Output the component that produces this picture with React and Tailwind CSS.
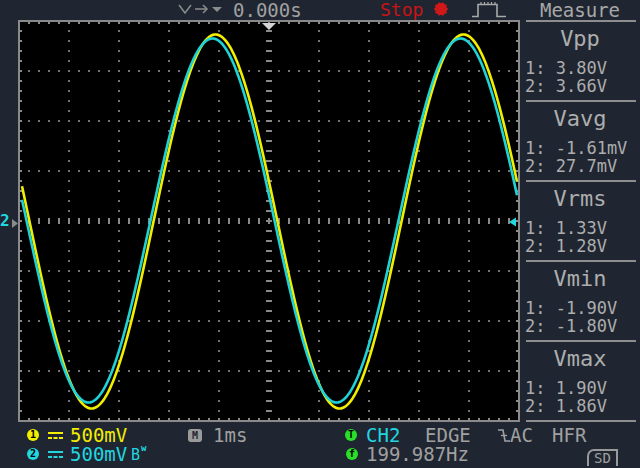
import React from 'react'

const GRID = '#727272'
const BORDER = '#8a8a8a'

const wave = (amp, center, peak) => {
  const pts = []
  for (let xs = 22; xs <= 517; xs++) {
    const ys = center - amp * Math.cos((2 * Math.PI * (xs - peak)) / 248)
    pts.push(`${xs - 18},${(ys - 20).toFixed(2)}`)
  }
  return pts.join(' ')
}

function Screen() {
  const marks = []
  for (let i = 1; i < 10; i++) {
    if (i === 5) continue
    for (let k = 1; k < 40; k++) marks.push(<rect key={`v${i}-${k}`} x={50 * i} y={10 * k} width="2" height="2" fill={GRID} />)
  }
  for (let j = 1; j < 8; j++) {
    if (j === 4) continue
    for (let k = 1; k < 50; k++) marks.push(<rect key={`h${j}-${k}`} x={10 * k} y={50 * j} width="2" height="2" fill={GRID} />)
  }
  // centre axes with perpendicular ticks
  for (let k = 1; k < 50; k++) marks.push(<rect key={`ch${k}`} x={10 * k} y="198" width="2" height="6" fill={BORDER} />)
  for (let k = 1; k < 40; k++) marks.push(<rect key={`cv${k}`} x="248" y={10 * k} width="6" height="2" fill={BORDER} />)
  // border ticks
  for (let k = 1; k < 50; k++) {
    marks.push(<rect key={`bt${k}`} x={10 * k} y="2" width="2" height="2" fill={BORDER} />)
    marks.push(<rect key={`bb${k}`} x={10 * k} y="398" width="2" height="2" fill={BORDER} />)
  }
  for (let k = 1; k < 40; k++) {
    marks.push(<rect key={`bl${k}`} x="2" y={10 * k} width="2" height="2" fill={BORDER} />)
    marks.push(<rect key={`br${k}`} x="498" y={10 * k} width="2" height="2" fill={BORDER} />)
  }

  return (
    <svg width="502" height="402" className="shrink-0 block">
      <rect x="0" y="0" width="502" height="402" fill="#000" />
      {marks}
      <rect x="1" y="1" width="500" height="400" fill="none" stroke={BORDER} strokeWidth="2" />
      <polyline points={wave(187, 221.5, 215.5)} fill="none" stroke="#f2ee00" strokeWidth="2.6" />
      <polyline points={wave(182, 220.5, 212.5)} fill="none" stroke="#1ed2d6" strokeWidth="2.6" />
      <polygon points="244,3 258,3 251,10" fill="#d4d4d4" />
      <polygon points="491,202 498,197.5 498,206.5" fill="#20d8e0" />
    </svg>
  )
}

function Spiky() {
  const pts = []
  for (let i = 0; i < 20; i++) {
    const a = (i / 20) * Math.PI * 2
    const r = i % 2 === 0 ? 7.2 : 5.8
    pts.push(`${(8 + r * Math.cos(a)).toFixed(2)},${(9 + r * Math.sin(a)).toFixed(2)}`)
  }
  return (
    <svg width="16" height="18" className="shrink-0">
      <polygon points={pts.join(' ')} fill="#d01818" />
    </svg>
  )
}

function TopBar() {
  return (
    <div className="h-[20px] flex text-[#a0a0a0]">
      <div className="w-[520px] flex items-start">
        <div className="w-[178px] shrink-0" />
        <svg width="55" height="20" className="shrink-0">
          <polyline points="1,5 7,13 13,5" fill="none" stroke="#8c8c8c" strokeWidth="1.5" />
          <line x1="17" y1="9" x2="29" y2="9" stroke="#8c8c8c" strokeWidth="1.5" />
          <polyline points="25,5 29,9 25,13" fill="none" stroke="#8c8c8c" strokeWidth="1.5" />
          <polygon points="34,7 44,7 39,12" fill="#8c8c8c" />
        </svg>
        <span className="w-[147px] shrink-0 text-[19px] leading-[20px]">0.000s</span>
        <span className="w-[53px] shrink-0 text-[18px] leading-[19px] text-[#c81414]">Stop</span>
        <Spiky />
        <div className="w-[23px] shrink-0" />
        <svg width="34" height="20" className="shrink-0">
          <polyline points="0,16.5 6,16.5 6,4.5 25,4.5 25,16.5 34,16.5" fill="none" stroke="#a8a8a8" strokeWidth="1.6" />
          {[9, 12.5, 16, 19.5, 23].map((x) => (
            <line key={x} x1={x} y1="2" x2={x} y2="4" stroke="#a8a8a8" strokeWidth="1.2" />
          ))}
        </svg>
      </div>
      <div className="w-[120px] text-center text-[19px] leading-[20px] text-[#a8a8a8]">Measure</div>
    </div>
  )
}

const measures = [
  { name: 'Vpp', v1: '3.80V', v2: '3.66V' },
  { name: 'Vavg', v1: '-1.61mV', v2: '27.7mV' },
  { name: 'Vrms', v1: '1.33V', v2: '1.28V' },
  { name: 'Vmin', v1: '-1.90V', v2: '-1.80V' },
  { name: 'Vmax', v1: '1.90V', v2: '1.86V' },
]

function Panel() {
  return (
    <div className="w-[120px] flex flex-col text-[#adadad]">
      <div className="h-[2px] ml-[6px] mr-[4px] bg-[#8e8e8e]" />
      {measures.map((m) => (
        <div key={m.name}>
          <div className="h-[78px] pt-[6px]">
            <div className="text-center text-[22px] leading-[22px]">{m.name}</div>
            <div className="mt-[9px] pl-[5px] text-[17px] leading-[18px] whitespace-pre">
              <div>{`1: ${m.v1}`}</div>
              <div>{`2: ${m.v2}`}</div>
            </div>
          </div>
          <div className="h-[2px] ml-[6px] mr-[4px] bg-[#8e8e8e]" />
        </div>
      ))}
    </div>
  )
}

function Dc({ color }) {
  return (
    <svg width="15" height="10" className="shrink-0 mt-[5px]">
      <rect x="0" y="1" width="15" height="2" fill={color} />
      <rect x="0" y="6" width="4" height="2" fill={color} />
      <rect x="5.5" y="6" width="4" height="2" fill={color} />
      <rect x="11" y="6" width="4" height="2" fill={color} />
    </svg>
  )
}

function Badge({ bg, children }) {
  return (
    <span
      className={`mt-[3px] w-[12px] h-[12px] rounded-full flex items-center justify-center text-[10px] leading-[10px] font-bold text-black ${bg}`}
    >
      {children}
    </span>
  )
}

function BottomBar() {
  return (
    <div className="h-[46px] pt-[4px] text-[19px] leading-[19px] text-[#a0a0a0]">
      <div className="h-[19px] flex items-start pl-[27px]">
        <div className="w-[21px] shrink-0 flex"><Badge bg="bg-[#f2ee00]">1</Badge></div>
        <div className="w-[22px] shrink-0 flex"><Dc color="#f2ee00" /></div>
        <span className="w-[118px] shrink-0 text-[#f2ee00]">500mV</span>
        <div className="w-[25px] shrink-0 flex">
          <span className="mt-[3px] w-[14px] h-[13px] rounded-[3px] bg-[#9a9a9a] flex items-center justify-center text-[10px] leading-[10px] font-bold text-[#1f2631]">M</span>
        </div>
        <span className="w-[132px] shrink-0">1ms</span>
        <div className="w-[21px] shrink-0 flex"><Badge bg="bg-[#28e028]">T</Badge></div>
        <span className="w-[59px] shrink-0 text-[#22d6e0]">CH2</span>
        <span className="w-[73px] shrink-0">EDGE</span>
        <svg width="12" height="19" className="shrink-0">
          <polyline points="0,4 5,4 7,15 12,15" fill="none" stroke="#a0a0a0" strokeWidth="1.6" />
          <line x1="3" y1="9.5" x2="9" y2="9.5" stroke="#a0a0a0" strokeWidth="1.4" />
        </svg>
        <span className="w-[42px] shrink-0">AC</span>
        <span>HFR</span>
      </div>
      <div className="h-[19px] flex items-start pl-[27px]">
        <div className="w-[21px] shrink-0 flex"><Badge bg="bg-[#22d6e0]">2</Badge></div>
        <div className="w-[22px] shrink-0 flex"><Dc color="#22d6e0" /></div>
        <div className="w-[276px] shrink-0 flex items-start text-[#22d6e0]">
          <span className="w-[61px]">500mV</span>
          <span className="text-[15px] leading-[15px] mt-[3px]">B</span>
          <span className="text-[9px] leading-[9px] ml-[1px] -mt-[1px] font-bold">w</span>
        </div>
        <div className="w-[20px] shrink-0 flex"><Badge bg="bg-[#28e028]">f</Badge></div>
        <span className="w-[221px] shrink-0">199.987Hz</span>
        <span className="mt-[4px] w-[31px] h-[17px] border-t-2 border-l-2 border-r-2 border-[#9a9a9a] rounded-tl-[7px] flex justify-center text-[14px] leading-[14px]">
          SD
        </span>
      </div>
    </div>
  )
}

export default function App() {
  return (
    <div className="w-[640px] h-[468px] overflow-hidden flex flex-col bg-[#1f2631] font-['DejaVu_Sans_Mono',monospace]">
      <TopBar />
      <div className="h-[402px] flex">
        <div className="w-[18px] shrink-0 relative">
          <span className="absolute left-[0px] top-[193px] text-[16px] leading-[16px] font-bold text-[#22d6e0]">2</span>
          <svg width="6" height="9" className="absolute left-[12px] top-[199px]">
            <polygon points="0,0 6,4.5 0,9" fill="#8a8a8a" />
          </svg>
        </div>
        <Screen />
        <Panel />
      </div>
      <BottomBar />
    </div>
  )
}
